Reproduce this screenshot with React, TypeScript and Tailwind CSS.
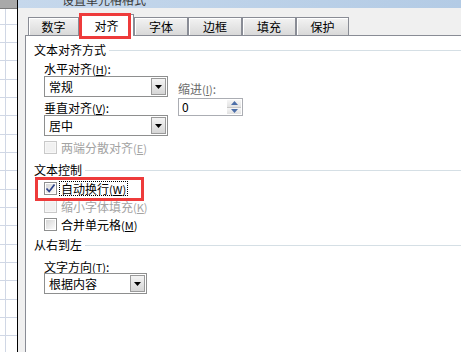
import React from "react";

// row heights of the sheet behind the dialog (lines are ~18.3px apart)
const rows = [16, 18, 18, 19, 18, 18, 19, 18, 18, 19, 18, 18, 19, 18, 18, 19, 18, 18, 19];

function Sheet() {
  return (
    <div className="flex w-[17px] shrink-0 flex-col bg-white">
      <div className="h-[9px] shrink-0 border-b border-[#7a7a7a] bg-[#a9a9a9]" />
      {rows.map((h, i) => (
        <div
          key={i}
          className="flex shrink-0 border-b border-[#d0d7e5]"
          style={{ height: h }}
        >
          <div className="w-[6px] border-r border-[#d0d7e5]" />
        </div>
      ))}
    </div>
  );
}

interface TabProps {
  label: string;
  w: string;
  active?: boolean;
}

function Tab({ label, w, active }: TabProps) {
  if (active) {
    return (
      <div
        className={`relative z-10 -mb-px flex h-[22px] items-center justify-center border border-b-0 border-[#898c95] bg-white ${w}`}
      >
        {label}
      </div>
    );
  }
  return (
    <div
      className={`flex h-[18px] items-center justify-center border border-b-0 border-[#898c95] bg-gradient-to-b from-[#f3f3f3] to-[#d9d9d9] shadow-[inset_1px_1px_0_#fff] ${w}`}
    >
      {label}
    </div>
  );
}

function Select({ value, w }: { value: string; w: string }) {
  return (
    <div className={`flex h-[21px] border border-[#8e8f8f] bg-white p-px ${w}`}>
      <div className="flex flex-1 items-center pl-[3px]">{value}</div>
      <div className="flex w-[15px] items-center justify-center border border-[#9a9a9a] bg-gradient-to-b from-[#f4f4f4] to-[#d6d6d6]">
        <svg width="7" height="4" viewBox="0 0 7 4">
          <path d="M0 0h7L3.5 4z" fill="#000" />
        </svg>
      </div>
    </div>
  );
}

function SpinBox() {
  return (
    <div className="flex h-[18px] w-[65px] border border-[#abadb3] bg-white">
      <div className="flex flex-1 items-center pl-[3px]">0</div>
      <div className="flex w-[16px] flex-col p-px">
        <div className="flex flex-1 items-center justify-center border-b border-[#c8c8c8] bg-gradient-to-b from-[#f6f6f6] to-[#e2e2e2]">
          <svg width="7" height="4" viewBox="0 0 7 4">
            <path d="M3.5 0L7 4H0z" fill="#4d6fa8" />
          </svg>
        </div>
        <div className="flex flex-1 items-center justify-center bg-gradient-to-b from-[#f6f6f6] to-[#e2e2e2]">
          <svg width="7" height="4" viewBox="0 0 7 4">
            <path d="M0 0h7L3.5 4z" fill="#4d6fa8" />
          </svg>
        </div>
      </div>
    </div>
  );
}

function Check({ checked, disabled }: { checked?: boolean; disabled?: boolean }) {
  return (
    <div
      className={`flex h-[13px] w-[13px] shrink-0 items-center justify-center border ${
        disabled ? "border-[#c9c9c9] bg-[#f7f7f7]" : "border-[#8e8f8f] bg-white"
      }`}
    >
      <div
        className={`relative h-[9px] w-[9px] ${
          disabled ? "bg-[#f1f1f1]" : "bg-gradient-to-br from-[#d6d6d6] to-[#fbfbfb]"
        }`}
      >
        {checked && (
          <svg className="absolute -left-px -top-px" width="11" height="11" viewBox="0 0 11 11">
            <path d="M1.5 5.5L4.2 8.5L9.5 1.5" stroke="#2c4189" strokeWidth="1.7" fill="none" />
          </svg>
        )}
      </div>
    </div>
  );
}

function GroupHead({ text }: { text: string }) {
  return (
    <div className="flex h-[12px] items-center">
      <span>{text}</span>
      <div className="ml-[3px] h-px flex-1 bg-[#d5dfe5]" />
    </div>
  );
}

function Key({ k }: { k: string }) {
  return (
    <span className="text-[11px]">
      (<u>{k}</u>)
    </span>
  );
}

function CheckRow({
  label,
  k,
  checked,
  disabled,
  focus,
}: {
  label: string;
  k: string;
  checked?: boolean;
  disabled?: boolean;
  focus?: boolean;
}) {
  return (
    <div className={`flex h-[13px] items-center gap-[2px] ${disabled ? "text-[#a3a3a3]" : ""}`}>
      <Check checked={checked} disabled={disabled} />
      <span
        className={`flex h-[15px] items-center px-px ${
          focus ? "border border-dotted border-black" : "border border-transparent"
        }`}
      >
        {label}
        <Key k={k} />
      </span>
    </div>
  );
}

function Dialog() {
  return (
    <div className="flex flex-1 flex-col">
      <div className="h-[8px] shrink-0 overflow-hidden bg-gradient-to-r from-[#c6d8ec] to-[#b3cbe5] pl-[44px]">
        <div className="-mt-[6px] leading-[12px] text-[#3a3a3a]">设置单元格格式</div>
      </div>
      <div className="flex flex-1 flex-col bg-[#f0f0f0] pl-[7px]">
        <div className="flex h-[27px] items-end pl-[3px]">
          <Tab label="数字" w="w-[51px]" />
          <Tab label="对齐" w="w-[55px]" active />
          <Tab label="字体" w="w-[54px]" />
          <Tab label="边框" w="w-[54px]" />
          <Tab label="填充" w="w-[54px]" />
          <Tab label="保护" w="w-[53px]" />
        </div>
        <div className="flex flex-1 flex-col border-l border-t border-[#898c95] bg-white pl-[8px] pt-[8px]">
          <GroupHead text="文本对齐方式" />
          <div className="ml-[10px] flex gap-[10px]">
            <div className="flex w-[124px] flex-col">
              <div className="mt-[7px] h-[12px]">
                水平对齐<Key k="H" />:
              </div>
              <div className="mt-[1px]">
                <Select value="常规" w="w-[124px]" />
              </div>
              <div className="mt-[5px] h-[12px]">
                垂直对齐<Key k="V" />:
              </div>
              <div className="mt-[1px]">
                <Select value="居中" w="w-[124px]" />
              </div>
              <div className="mt-[5px]">
                <CheckRow label="两端分散对齐" k="E" disabled />
              </div>
            </div>
            <div className="flex flex-col">
              <div className="mt-[27px] h-[12px] text-[#6d6d6d]">
                缩进<Key k="I" />:
              </div>
              <div className="mt-[3px]">
                <SpinBox />
              </div>
            </div>
          </div>

          <div className="mt-[10px]">
            <GroupHead text="文本控制" />
          </div>
          <div className="ml-[10px] flex flex-col">
            <div className="mt-[6px]">
              <CheckRow label="自动换行" k="W" checked focus />
            </div>
            <div className="mt-[5px]">
              <CheckRow label="缩小字体填充" k="K" disabled />
            </div>
            <div className="mt-[5px]">
              <CheckRow label="合并单元格" k="M" />
            </div>
          </div>

          <div className="mt-[8px]">
            <GroupHead text="从右到左" />
          </div>
          <div className="ml-[10px] flex flex-col">
            <div className="mt-[10px] h-[12px]">
              文字方向<Key k="T" />:
            </div>
            <div className="mt-0">
              <Select value="根据内容" w="w-[103px]" />
            </div>
          </div>
        </div>
      </div>
    </div>
  );
}

export default function App() {
  return (
    <div className="relative flex h-[352px] w-[461px] overflow-hidden bg-white font-['Noto_Sans_CJK_SC','Noto_Sans',sans-serif] text-[12px] leading-[12px] text-black">
      <Sheet />
      <div className="w-px shrink-0 bg-black" />
      <Dialog />
      {/* red annotation boxes */}
      <div className="pointer-events-none absolute left-[79px] top-[13px] z-20 h-[26px] w-[52px] border-[3px] border-[#ee3b3b]" />
      <div className="pointer-events-none absolute left-[35px] top-[177px] z-20 h-[24px] w-[109px] border-[3px] border-[#ee3b3b]" />
    </div>
  );
}
